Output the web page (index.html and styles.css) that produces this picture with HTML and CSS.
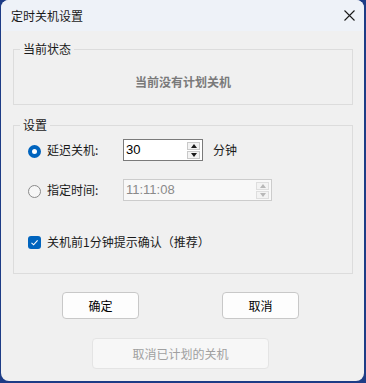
FILE: index.html
```html
<!DOCTYPE html>
<html lang="zh-CN">
<head>
    <meta charset="UTF-8">
    <title>定时关机设置</title>
    <link rel="stylesheet" href="styles.css">
</head>
<body>

    <div class="window">
        <!-- title bar -->
        <div class="titlebar">
            <span class="title">定时关机设置</span>
            <span class="close">
                <svg width="11" height="11" viewBox="0 0 11 11">
                    <path d="M0.5 0.5 L10.5 10.5 M10.5 0.5 L0.5 10.5" stroke="#1a1a1a" stroke-width="1.1" fill="none"/>
                </svg>
            </span>
        </div>

        <div class="content">
            <fieldset class="group status-group">
                <legend>当前状态</legend>
                <div class="status-text">当前没有计划关机</div>
            </fieldset>

            <fieldset class="group settings-group">
                <legend>设置</legend>

                <div class="settings-body">
                    <div class="row">
                        <span class="radio checked"></span>
                        <span class="label">延迟关机:</span>
                        <div class="spin">
                            <span class="spin-value">30</span>
                            <div class="spin-buttons">
                                <span class="spin-btn"><i class="arrow up"></i></span>
                                <span class="spin-btn"><i class="arrow down"></i></span>
                            </div>
                        </div>
                        <span class="unit">分钟</span>
                    </div>

                    <div class="row row-time">
                        <span class="radio"></span>
                        <span class="label">指定时间:</span>
                        <div class="spin spin-time">
                            <span class="spin-value">11:11:08</span>
                            <div class="spin-buttons">
                                <span class="spin-btn"><i class="arrow up"></i></span>
                                <span class="spin-btn"><i class="arrow down"></i></span>
                            </div>
                        </div>
                    </div>

                    <div class="row row-check">
                        <span class="checkbox">
                            <svg width="9" height="9" viewBox="0 0 9 9">
                                <path d="M1.5 4.8 L3.6 6.8 L7.6 2.3" stroke="#ffffff" stroke-width="1.1" fill="none"/>
                            </svg>
                        </span>
                        <span class="label">关机前1分钟提示确认（推荐）</span>
                    </div>
                </div>
            </fieldset>

            <div class="buttons">
                <button class="btn">确定</button>
                <button class="btn">取消</button>
            </div>

            <div class="bottom">
                <button class="btn btn-disabled">取消已计划的关机</button>
            </div>
        </div>
    </div>

</body>
</html>
```

FILE: styles.css
```css
/* Basic styling */
body {
    margin: 0;
    padding: 0;
    background-color: #1d3c86;
    font-family: "Noto Sans CJK SC", "Noto Sans", sans-serif;
    font-size: 12px;
    color: #1a1a1a;
}
.window {
    width: 363px;
    height: 381px;
    margin-left: 1px;
    background-color: #f0f0f0;
    border-radius: 8px;
    overflow: hidden;
}
.titlebar {
    height: 31px;
    background-color: #eef2f8;
    display: flex;
    align-items: center;
    justify-content: space-between;
    padding: 0 9px 0 10px;
}
.title {
    line-height: 16px;
}
.close {
    display: flex;
    width: 11px;
    height: 11px;
}
.content {
    padding: 11px 11px 0 12px;
}
.group {
    margin: 0;
    padding: 0;
    border: 1px solid #dcdcdc;
    min-width: 0;
}
.group legend {
    margin-left: 6px;
    padding: 0 3px;
    line-height: 14px;
}
.status-text {
    padding: 18px 0 14px;
    text-align: center;
    line-height: 16px;
    color: #7a7a7a;
    font-weight: bold;
}
.settings-group {
    margin-top: 13px;
}
.settings-body {
    padding: 7px 0 23px 14px;
}
.row {
    display: flex;
    align-items: center;
    height: 22px;
}
.row-time {
    margin-top: 18px;
}
.row-check {
    margin-top: 33px;
    height: 16px;
}
.radio {
    box-sizing: border-box;
    width: 13px;
    height: 13px;
    border-radius: 50%;
    border: 1px solid #8a8a8a;
    background-color: #f6f6f6;
    margin-top: 2px;
}
.radio.checked {
    border: 4px solid #0064be;
    background-color: #ffffff;
}
.label {
    margin-left: 6px;
    line-height: 16px;
}
.row .label {
    width: 76px;
}
.row-check .label {
    width: auto;
}
.spin {
    box-sizing: border-box;
    width: 80px;
    height: 22px;
    border: 1px solid #7a7a7a;
    background-color: #ffffff;
    display: flex;
    align-items: center;
    justify-content: space-between;
    padding: 0 2px;
}
.spin-value {
    font-family: "Liberation Sans", Arial, sans-serif;
    font-size: 13px;
    line-height: 16px;
    color: #000000;
}
.spin-buttons {
    display: flex;
    flex-direction: column;
    gap: 1px;
}
.spin-btn {
    box-sizing: border-box;
    width: 13px;
    height: 8px;
    border: 1px solid #c9c9c9;
    background-color: #f3f3f3;
    display: flex;
    align-items: center;
    justify-content: center;
}
.arrow {
    width: 0;
    height: 0;
    border-left: 3px solid transparent;
    border-right: 3px solid transparent;
}
.arrow.up {
    border-bottom: 4px solid #1a1a1a;
}
.arrow.down {
    border-top: 4px solid #1a1a1a;
}
.unit {
    margin-left: 10px;
    line-height: 16px;
}
.spin-time {
    width: 149px;
    border-color: #cccccc;
    background-color: #f8f8f8;
}
.spin-time .spin-value {
    color: #8a8a8a;
}
.spin-time .spin-btn {
    border-color: #dedede;
}
.spin-time .arrow.up {
    border-bottom-color: #b8b8b8;
}
.spin-time .arrow.down {
    border-top-color: #b8b8b8;
}
.checkbox {
    width: 13px;
    height: 13px;
    border-radius: 3px;
    background-color: #0064be;
    display: flex;
    align-items: center;
    justify-content: center;
}
.buttons {
    display: flex;
    gap: 83px;
    margin-top: 18px;
    padding-left: 49px;
}
.btn {
    box-sizing: border-box;
    width: 77px;
    height: 27px;
    font-family: "Noto Sans CJK SC", "Noto Sans", sans-serif;
    font-size: 12px;
    color: #000000;
    background-color: #fdfdfd;
    border: 1px solid #c8c8c8;
    border-radius: 4px;
    padding: 0;
}
.bottom {
    display: flex;
    margin-top: 19px;
    padding-left: 79px;
}
.btn-disabled {
    width: 177px;
    height: 31px;
    color: #a0a0a0;
    background-color: #f7f7f7;
    border-color: #e4e4e4;
}
```
